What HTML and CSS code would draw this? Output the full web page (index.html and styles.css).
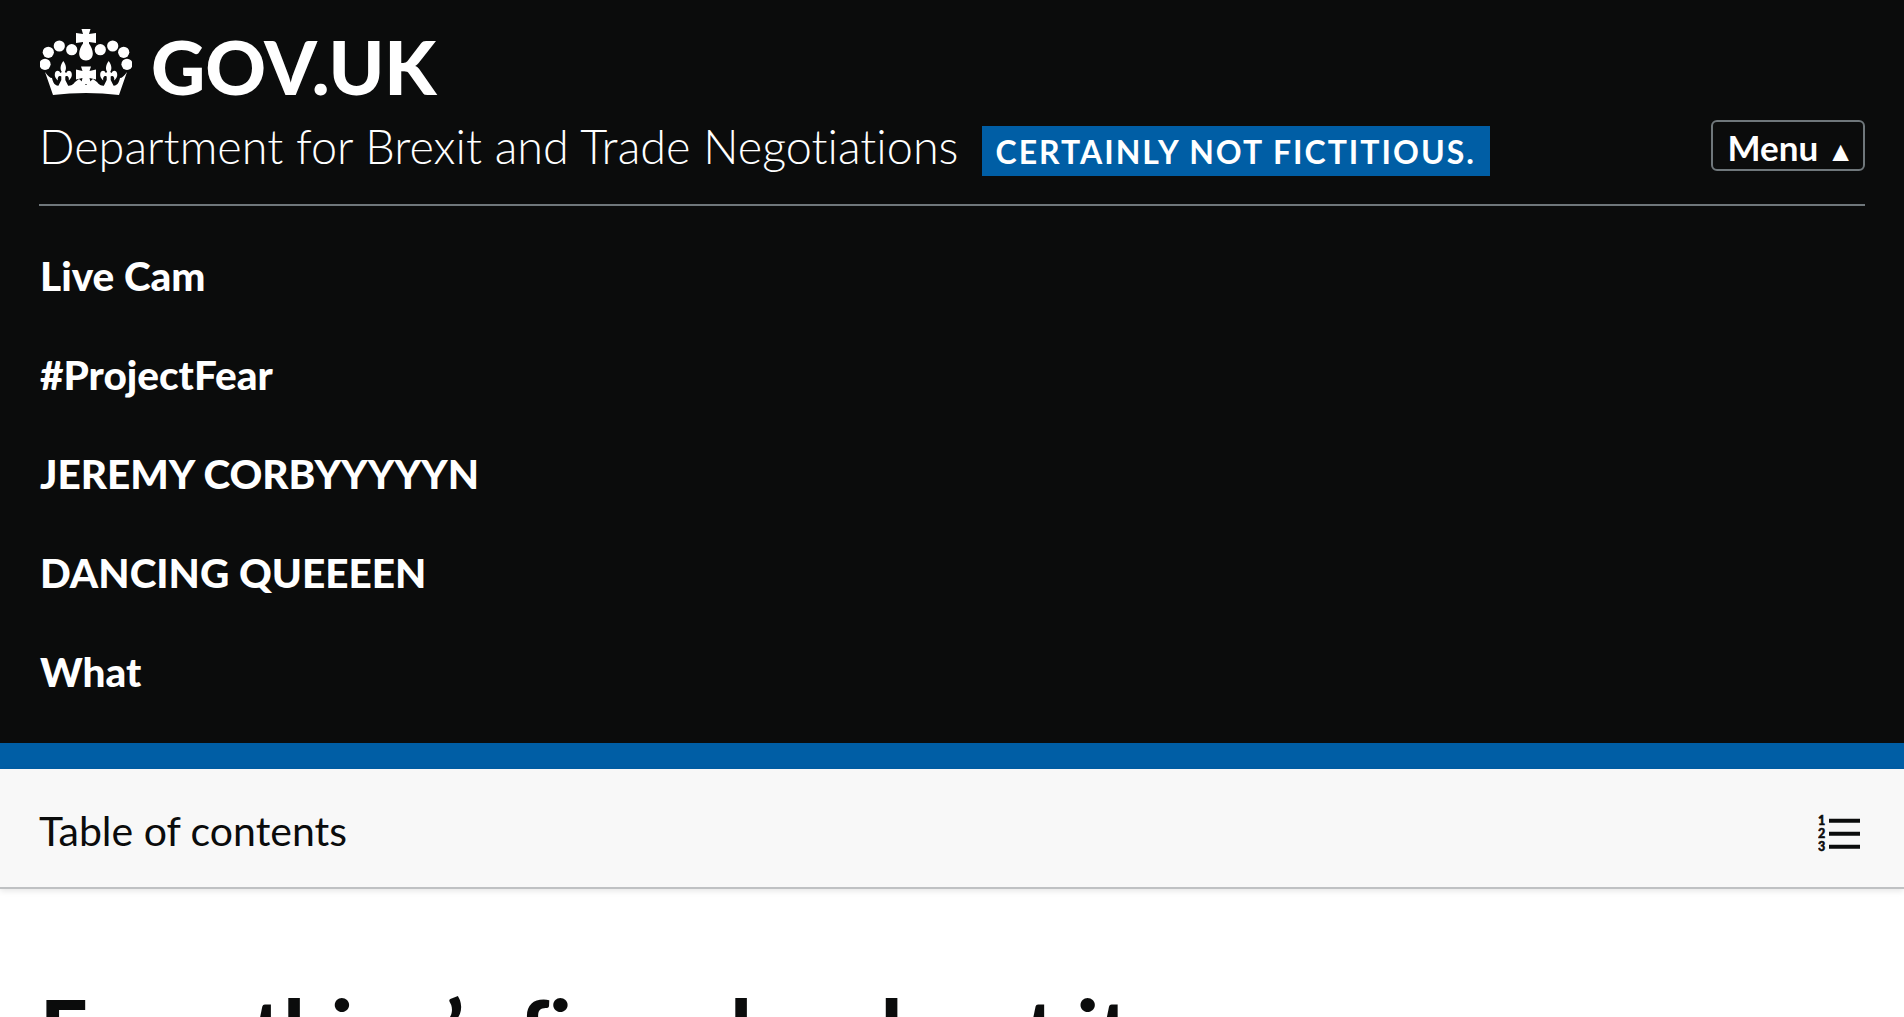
FILE: index.html
```html
<!DOCTYPE html>
<html lang="en">
<head>
<meta charset="UTF-8" />
<meta name="viewport" content="width=device-width, initial-scale=1" />
<title>GOV.UK - Department for Brexit and Trade Negotiations</title>
<link rel="stylesheet" href="styles.css">
</head>
<body>
  <header class="header">
    <div class="logo">
      <svg class="crown" viewBox="0 0 92 68" aria-hidden="true">
        <defs>
          <path id="fleur" d="M0 32C3 36 3.500 40 1.500 43L3 44C4 41 8 41 8.500 45C9 48 7 50 5.500 51.500C6 48 4.500 46.500 3 47L2 47.500V51L5 57H-5L-2 51V47.500L-3 47C-4.500 46.500-6 48-5.500 51.500C-7 50-9 48-8.500 45C-8 41-4 41-3 44L-1.500 43C-3.500 40-3 36 0 32Z"/>
        </defs>
        <g fill="#fff">
          <circle cx="8.300" cy="23.300" r="5.600"/>
          <circle cx="19.300" cy="17" r="5.600"/>
          <circle cx="31.700" cy="20.700" r="5.600"/>
          <circle cx="60.300" cy="20.700" r="5.600"/>
          <circle cx="72.700" cy="17" r="5.600"/>
          <circle cx="83.700" cy="23.300" r="5.600"/>
          <circle cx="5" cy="35.300" r="5.600"/>
          <circle cx="87" cy="35.300" r="5.600"/>
          <path d="M41.500 0h9l-1.500 5 7-1v10l-7-1v1.500c2 3 3.800 6.500 3.800 10 0 4-2.500 7-6.800 7s-6.800-3-6.800-7c0-3.500 1.800-7 3.800-10V13l-7 1V4l7 1z"/>
          <path d="M5 43C8 47 10 49 12 49C13 54 15 57 20 57H26C30 57 33 56 35 53L39 50L46 56L53 50L57 53C59 56 62 57 66 57H72C77 57 79 54 80 49C82 49 84 47 87 43L79 66Q46 62 13 66Z"/>
          <path d="M41 37.500H51L49.500 42L56 40.500V50.500L49.500 49L51 55H41L42.500 49L36 50.500V40.500L42.500 42Z"/>
          <use href="#fleur" x="23.300"/>
          <use href="#fleur" x="68.700"/>
        </g>
      </svg>
      <span class="logo-text">GOV.UK</span>
    </div>
    <div class="service">
      <span class="dept">Department for Brexit and Trade Negotiations</span>
      <strong class="tag">CERTAINLY NOT FICTITIOUS.</strong>
      <button class="menu-btn">Menu <span class="arrow">▲</span></button>
    </div>
    <nav class="nav">
      <a href="#">Live Cam</a>
      <a href="#">#ProjectFear</a>
      <a href="#">JEREMY CORBYYYYYN</a>
      <a href="#">DANCING QUEEEEN</a>
      <a href="#">What</a>
    </nav>
  </header>
  <div class="band"></div>
  <div class="toc">
    <span class="toc-title">Table of contents</span>
    <svg class="toc-icon" viewBox="0 0 42 44" aria-hidden="true">
      <g font-family="Lato, sans-serif" font-weight="900" font-size="12.500" fill="#0b0c0c" stroke="#0b0c0c" stroke-width=".5">
        <text x="0" y="15">1</text>
        <text x="0" y="28">2</text>
        <text x="0" y="41">3</text>
      </g>
      <path d="M11 10.700h31M11 23.700h31M11 36.700h31" stroke="#0b0c0c" stroke-width="4"/>
    </svg>
  </div>
  <main class="main">
    <h1>Everything’s fine, dw about it</h1>
  </main>
</body>
</html>
```

FILE: styles.css
```css
html, body {
  margin: 0;
  height: 1017px;
  overflow: hidden;
}
body {
  font-family: Lato, "Liberation Sans", sans-serif;
  font-variant-ligatures: none;
  color: #0b0c0c;
  background: #fff;
}
.header {
  background: #0b0c0c;
  color: #fff;
  padding: 29px 39px 0;
  height: 714px;
}
.logo {
  display: flex;
  align-items: center;
  gap: 19px;
  height: 68px;
  padding-left: 1px;
}
.crown {
  width: 92px;
  height: 68px;
  display: block;
}
.logo-text {
  font-size: 75px;
  font-weight: 900;
  line-height: 68px;
  padding-top: 6px;
}
.service {
  display: flex;
  align-items: center;
  height: 97px;
  padding: 0 0 10px;
  border-bottom: 2px solid #6f777b;
}
.dept {
  font-size: 46.800px;
  font-weight: 300;
  line-height: 50px;
}
.tag {
  background: #005ea5;
  font-size: 32px;
  letter-spacing: 2px;
  line-height: 50px;
  padding: 1px 14px 0;
  height: 49px;
  margin: 10px 0 0 23px;
}
.menu-btn {
  margin-left: auto;
  width: 154px;
  height: 51px;
  background: #0b0c0c;
  color: #fff;
  border: 2px solid #6f777b;
  border-radius: 6px;
  font-family: inherit;
  font-size: 35px;
  font-weight: 700;
  padding: 2px 0 0 6px;
}
.arrow {
  font-size: 28px;
}
.nav {
  display: flex;
  flex-direction: column;
  padding: 20px 0 0 1px;
}
.nav a {
  color: #fff;
  font-size: 40.500px;
  font-weight: 900;
  line-height: 99px;
  text-decoration: none;
}
.band {
  background: #005ea5;
  height: 26px;
}
.toc {
  display: flex;
  justify-content: space-between;
  align-items: center;
  background: #f8f8f8;
  height: 110px;
  padding: 8px 40px 0 39px;
  font-size: 41px;
  border-bottom: 2px solid #bfc1c3;
  box-shadow: 0 2px 6px rgba(0,0,0,0.1);
}
.toc-title {
  margin-bottom: 3px;
}
.toc-icon {
  width: 42px;
  height: 44px;
  margin-right: 4px;
}
.main {
  padding: 90px 40px 0;
}
h1 {
  margin: 0;
  font-size: 84px;
  font-weight: 900;
  line-height: 100px;
}
```
